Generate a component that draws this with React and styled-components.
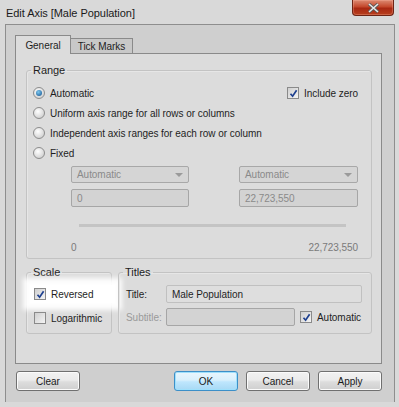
import React from 'react';
import styled, { createGlobalStyle, css } from 'styled-components';

const GlobalStyle = createGlobalStyle`
  html, body {
    margin: 0;
    padding: 0;
    background: #d9d9d9;
  }
  body {
    font-family: 'Liberation Sans', Arial, sans-serif;
    font-size: 10px;
    letter-spacing: -0.05px;
    color: #1e1e1e;
  }
`;

const CheckIcon = () => (
  <svg width="9" height="9" viewBox="0 0 9 9">
    <path d="M1.5 4.8 L3.6 7.2 L7.6 1.2" fill="none" stroke="#1d3f8f" strokeWidth="1.7" />
  </svg>
);

const App = () => {
  return (
    <>
      <GlobalStyle />
      <Window>
        <TitleBar>
          <span>Edit Axis [Male Population]</span>
          <CloseButton>
            <svg width="13" height="10" viewBox="0 0 13 10">
              <path d="M2 1 L11 9 M11 1 L2 9" stroke="#5a5a5a" strokeWidth="3.2" />
              <path d="M2 1 L11 9 M11 1 L2 9" stroke="#e8e8e8" strokeWidth="1.6" />
            </svg>
          </CloseButton>
        </TitleBar>
        <Frame>
          <Tabs>
            <Tab active>General</Tab>
            <Tab>Tick Marks</Tab>
          </Tabs>
          <Panel>
            <Group>
              <Legend>Range</Legend>
              <RangeBody>
                <RadioRow>
                  <Option>
                    <Radio checked />
                    Automatic
                  </Option>
                  <Option>
                    <Checkbox checked>
                      <CheckIcon />
                    </Checkbox>
                    Include zero
                  </Option>
                </RadioRow>
                <RadioRow>
                  <Option>
                    <Radio />
                    Uniform axis range for all rows or columns
                  </Option>
                </RadioRow>
                <RadioRow>
                  <Option>
                    <Radio />
                    Independent axis ranges for each row or column
                  </Option>
                </RadioRow>
                <RadioRow>
                  <Option>
                    <Radio />
                    Fixed
                  </Option>
                </RadioRow>
                <FixedGrid>
                  <Select>
                    Automatic
                    <Caret />
                  </Select>
                  <Select>
                    Automatic
                    <Caret />
                  </Select>
                  <Field disabled>0</Field>
                  <Field disabled>22,723,550</Field>
                </FixedGrid>
                <Track />
                <Ends>
                  <span>0</span>
                  <span>22,723,550</span>
                </Ends>
              </RangeBody>
            </Group>
            <BottomRow>
              <Group>
                <Legend>Scale</Legend>
                <ScaleBody>
                  <Option highlight>
                    <Checkbox checked>
                      <CheckIcon />
                    </Checkbox>
                    Reversed
                  </Option>
                  <Option>
                    <Checkbox />
                    Logarithmic
                  </Option>
                </ScaleBody>
              </Group>
              <Group grow>
                <Legend>Titles</Legend>
                <TitlesBody>
                  <FieldLabel>Title:</FieldLabel>
                  <Field span={2}>Male Population</Field>
                  <FieldLabel disabled>Subtitle:</FieldLabel>
                  <Field disabled />
                  <Option>
                    <Checkbox checked>
                      <CheckIcon />
                    </Checkbox>
                    Automatic
                  </Option>
                </TitlesBody>
              </Group>
            </BottomRow>
          </Panel>
          <Buttons>
            <Button>Clear</Button>
            <Spacer />
            <Button primary>OK</Button>
            <Button>Cancel</Button>
            <Button>Apply</Button>
          </Buttons>
        </Frame>
      </Window>
    </>
  );
};

export default App;

const Window = styled.div`
  width: 399px;
  height: 407px;
  display: flex;
  flex-direction: column;
  box-sizing: border-box;
  background: #d9d9d9;
`;

const TitleBar = styled.div`
  height: 24px;
  display: flex;
  justify-content: space-between;
  align-items: flex-start;
  padding: 0 5px 0 6px;

  span {
    margin-top: 7px;
    font-size: 11px;
    color: #1a1a1a;
  }
`;

const CloseButton = styled.div`
  width: 42px;
  height: 16px;
  box-sizing: border-box;
  display: flex;
  align-items: center;
  justify-content: center;
  border: 1px solid #6e2414;
  border-top: none;
  border-radius: 0 0 4px 4px;
  background: linear-gradient(#dc8a72 0%, #c4482c 45%, #a82812 55%, #b8401f 100%);
  box-shadow: inset 0 0 0 1px rgba(255, 190, 170, 0.3);
`;

const Frame = styled.div`
  flex: 1;
  margin: 0 4px 5px 5px;
  border: 1px solid #8e8e8e;
  border-bottom: none;
  background: #cfcfcf;
  padding: 10px 12px 0 9px;
  display: flex;
  flex-direction: column;
`;

const Tabs = styled.div`
  display: flex;
  align-items: flex-end;
  height: 18px;
  position: relative;
  z-index: 1;
`;

const Tab = styled.div`
  box-sizing: border-box;
  border: 1px solid #8a8a8a;
  border-bottom: none;
  display: flex;
  align-items: center;
  justify-content: center;
  white-space: nowrap;
  ${({ active }) =>
    active
      ? css`
          height: 19px;
          margin-bottom: -1px;
          background: #dcdcdc;
          width: 56px;
          padding-top: 1px;
        `
      : css`
          height: 15px;
          background: #c8c8c8;
          margin-left: -1px;
          width: 63px;
        `}
`;

const Panel = styled.div`
  height: 311px;
  box-sizing: border-box;
  border: 1px solid #8a8a8a;
  background: #dcdcdc;
  padding: 10px 9px 0 10px;
  display: flex;
  flex-direction: column;
  gap: 7px;
`;

const Group = styled.fieldset`
  margin: 0;
  border: 1px solid #c3c3c3;
  border-radius: 3px;
  box-shadow: inset 1px 1px 0 #e6e6e6;
  padding: 0;
  min-width: 0;
  ${({ grow }) => grow && 'flex: 1;'}
`;

const Legend = styled.legend`
  margin-left: 4px;
  padding: 0 2px;
  font-size: 11px;
  line-height: 13px;
`;

const RangeBody = styled.div`
  padding: 6px 13px 3px 6px;
  display: flex;
  flex-direction: column;
`;

const RadioRow = styled.div`
  display: flex;
  justify-content: space-between;
  align-items: center;
  height: 20px;
`;

const Option = styled.label`
  display: flex;
  align-items: center;
  gap: 5px;
  height: 18px;
  ${({ highlight }) =>
    highlight &&
    css`
      background: #ffffff;
      margin: 0 -4px;
      padding: 0 4px;
      box-shadow: 0 0 5px 7px rgba(255, 255, 255, 0.95);
    `}
`;

const Radio = styled.span`
  width: 12px;
  height: 12px;
  box-sizing: border-box;
  border-radius: 50%;
  border: 1px solid #8d8d8d;
  background: radial-gradient(circle at 40% 35%, #ffffff, #c4c4c4);
  display: flex;
  align-items: center;
  justify-content: center;

  &::after {
    content: '';
    display: ${({ checked }) => (checked ? 'block' : 'none')};
    width: 6px;
    height: 6px;
    border-radius: 50%;
    background: radial-gradient(circle at 40% 35%, #7cc8f0, #104e8a);
  }
`;

const Checkbox = styled.span`
  width: 12px;
  height: 12px;
  box-sizing: border-box;
  border: 1px solid #8a8a8a;
  background: linear-gradient(135deg, #cfcfcf, #f4f4f4);
  display: flex;
  align-items: center;
  justify-content: center;
`;

const FixedGrid = styled.div`
  display: grid;
  grid-template-columns: 118px 119px;
  justify-content: space-between;
  row-gap: 6px;
  margin: 3px 0 0 38px;
`;

const boxBase = css`
  box-sizing: border-box;
  height: 17px;
  border: 1px solid #a8a8a8;
  border-radius: 2px;
  display: flex;
  align-items: center;
  padding: 0 5px;
`;

const Select = styled.div`
  ${boxBase}
  justify-content: space-between;
  background: #d5d5d5;
  color: #8a8a8a;
`;

const Caret = styled.span`
  width: 0;
  height: 0;
  border-left: 4px solid transparent;
  border-right: 4px solid transparent;
  border-top: 4px solid #9a9a9a;
`;

const Field = styled.div`
  ${boxBase}
  height: 18px;
  color: ${({ disabled }) => (disabled ? '#8a8a8a' : '#1e1e1e')};
  background: ${({ disabled }) => (disabled ? '#d3d3d3' : '#dedede')};
  border-color: ${({ disabled }) => (disabled ? '#a6a6a6' : '#c0c0c0')};
  ${({ span }) => span && `grid-column: span ${span};`}
`;

const Track = styled.div`
  height: 3px;
  background: #c4c4c4;
  margin: 17px 12px 0 46px;
`;

const Ends = styled.div`
  display: flex;
  justify-content: space-between;
  margin: 15px 0 0 38px;
  color: #7a7a7a;
  height: 13px;
`;

const BottomRow = styled.div`
  display: flex;
  gap: 6px;
`;

const ScaleBody = styled.div`
  width: 84px;
  box-sizing: border-box;
  padding: 6px 0 6px 7px;
  display: flex;
  flex-direction: column;
  gap: 6px;
`;

const TitlesBody = styled.div`
  display: grid;
  grid-template-columns: 40px 129px auto;
  align-items: center;
  row-gap: 5px;
  column-gap: 0;
  padding: 6px 9px 6px 7px;

  & > label {
    margin-left: 5px;
  }
`;

const FieldLabel = styled.span`
  color: ${({ disabled }) => (disabled ? '#9a9a9a' : '#1e1e1e')};
`;

const Buttons = styled.div`
  display: flex;
  align-items: center;
  gap: 8px;
  padding: 7px 0 0 1px;
`;

const Spacer = styled.div`
  flex: 1;
`;

const Button = styled.button`
  width: 64px;
  height: 20px;
  box-sizing: border-box;
  border: 1px solid ${({ primary }) => (primary ? '#3c8fc8' : '#707070')};
  border-radius: 3px;
  font-family: 'Liberation Sans', Arial, sans-serif;
  font-size: 10px;
  color: #1a1a1a;
  padding: 0;
  background: ${({ primary }) =>
    primary
      ? 'linear-gradient(#eaf6fd 0%, #d9f0fc 45%, #bee6fd 55%, #a7d9f5 100%)'
      : 'linear-gradient(#f2f2f2 0%, #ebebeb 45%, #dddddd 55%, #cfcfcf 100%)'};
  box-shadow: ${({ primary }) =>
    primary ? 'inset 0 0 0 1px #9fe0fc' : 'inset 0 0 0 1px #fbfbfb'};
`;
